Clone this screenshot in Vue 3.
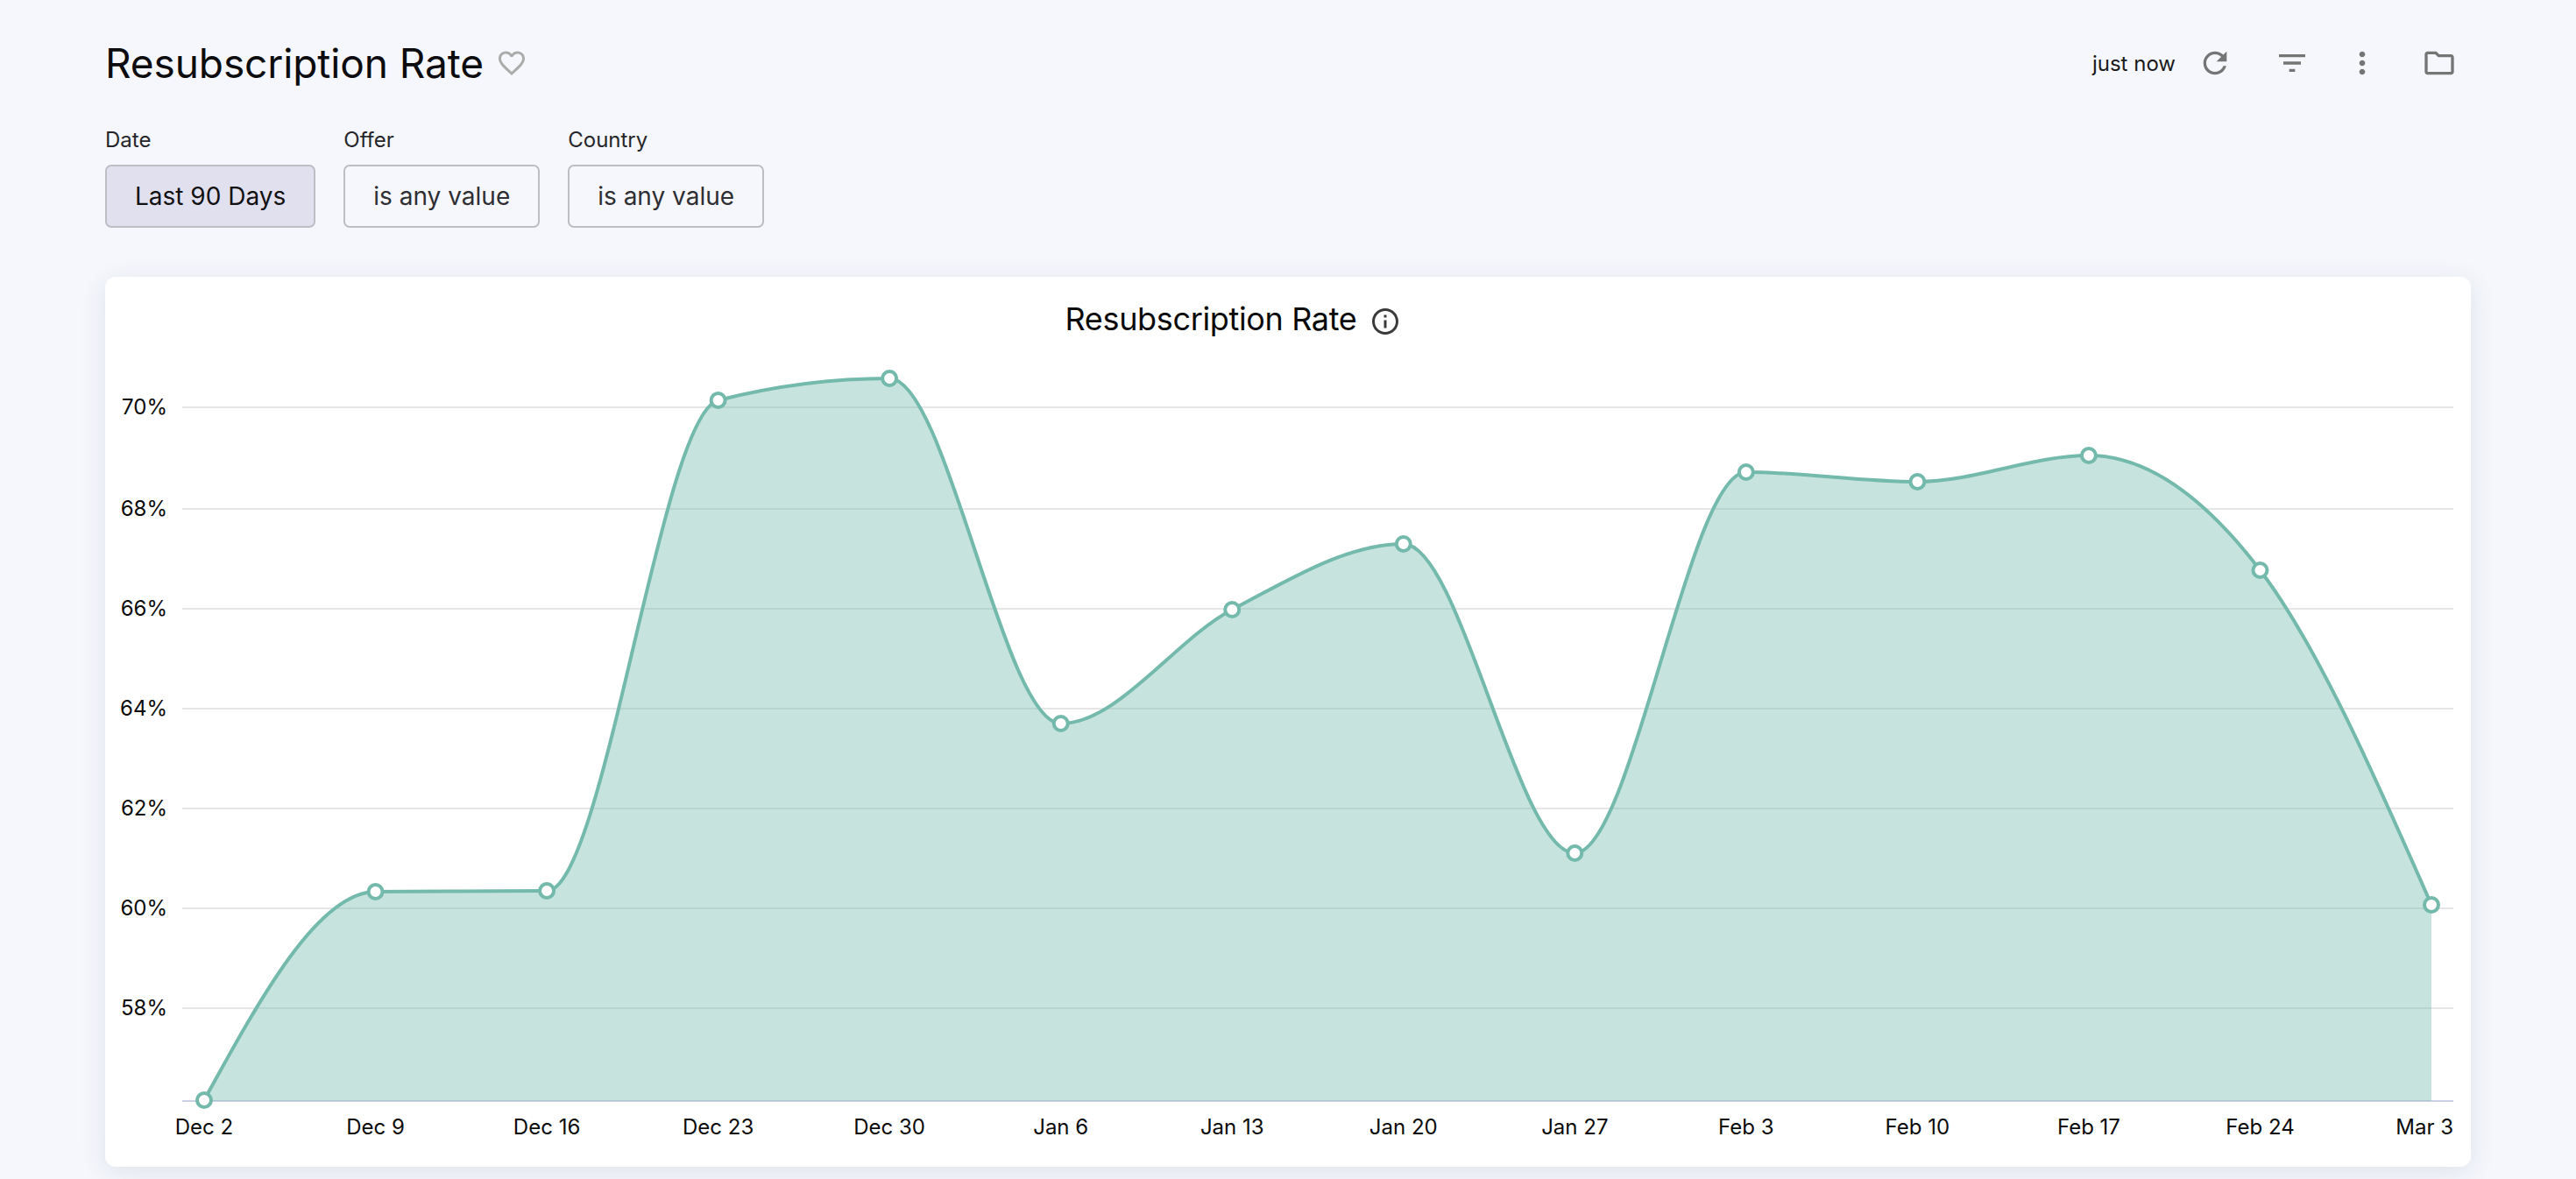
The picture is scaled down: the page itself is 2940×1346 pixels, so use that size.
<script setup>
const data = [
  ['Dec 2', 1256], ['Dec 9', 1018], ['Dec 16', 1017], ['Dec 23', 457], ['Dec 30', 432], ['Jan 6', 826], ['Jan 13', 696],
  ['Jan 20', 621], ['Jan 27', 974], ['Feb 3', 539], ['Feb 10', 550], ['Feb 17', 520], ['Feb 24', 651], ['Mar 3', 1033],
]
const x0 = 233
const step = (2775 - 233) / 13
const top = 316
const points = data.map(([label, y], i) => ({ label, x: x0 + step * i, y: y - top }))

const ticks = [
  ['70%', 465], ['68%', 581], ['66%', 695], ['64%', 809], ['62%', 923], ['60%', 1037], ['58%', 1151],
].map(([label, y]) => ({ label, y: y - top }))
const axisY = 1257 - top

function sign(v) { return v < 0 ? -1 : 1 }
function monotonePath(p) {
  const n = p.length
  const t = new Array(n)
  const slope = (a, b) => (b.y - a.y) / (b.x - a.x)
  for (let i = 1; i < n - 1; i++) {
    const h0 = p[i].x - p[i - 1].x
    const h1 = p[i + 1].x - p[i].x
    const s0 = slope(p[i - 1], p[i])
    const s1 = slope(p[i], p[i + 1])
    const m = (s0 * h1 + s1 * h0) / (h0 + h1)
    t[i] = (sign(s0) + sign(s1)) * Math.min(Math.abs(s0), Math.abs(s1), 0.5 * Math.abs(m)) || 0
  }
  t[0] = (3 * slope(p[0], p[1]) - t[1]) / 2
  t[n - 1] = (3 * slope(p[n - 2], p[n - 1]) - t[n - 2]) / 2
  let d = `M${p[0].x} ${p[0].y}`
  for (let i = 0; i < n - 1; i++) {
    const dx = (p[i + 1].x - p[i].x) / 3
    d += `C${p[i].x + dx} ${p[i].y + dx * t[i]} ${p[i + 1].x - dx} ${p[i + 1].y - dx * t[i + 1]} ${p[i + 1].x} ${p[i + 1].y}`
  }
  return d
}
const line = monotonePath(points)
const area = `${line}L${points[points.length - 1].x} ${axisY}L${points[0].x} ${axisY}Z`

const filters = [
  { label: 'Date', value: 'Last 90 Days', active: true },
  { label: 'Offer', value: 'is any value', active: false },
  { label: 'Country', value: 'is any value', active: false },
]
</script>

<template>
  <div class="page">
    <header class="top">
      <div class="title-wrap">
        <h1 class="title">Resubscription Rate</h1>
        <svg class="heart" viewBox="0 0 24 24"><path d="M16.5 3c-1.74 0-3.41.81-4.5 2.09C10.91 3.81 9.24 3 7.5 3 4.42 3 2 5.42 2 8.5c0 3.78 3.4 6.86 8.55 11.54L12 21.35l1.45-1.32C18.6 15.36 22 12.28 22 8.5 22 5.42 19.58 3 16.5 3zm-4.4 15.55l-.1.1-.1-.1C7.14 14.24 4 11.39 4 8.5 4 6.5 5.5 5 7.5 5c1.54 0 3.04.99 3.57 2.36h1.87C13.46 5.99 14.96 5 16.5 5c2 0 3.5 1.5 3.5 3.5 0 2.89-3.14 5.74-7.9 10.05z"/></svg>
      </div>
      <div class="tools">
        <span class="stamp">just now</span>
        <svg class="tool refresh" viewBox="0 0 24 24"><path d="M17.65 6.35C16.2 4.9 14.21 4 12 4c-4.42 0-7.99 3.58-7.99 8s3.57 8 7.99 8c3.73 0 6.84-2.55 7.73-6h-2.08c-.82 2.33-3.04 4-5.65 4-3.31 0-6-2.69-6-6s2.69-6 6-6c1.66 0 3.14.69 4.22 1.78L13 11h7V4l-2.35 2.35z"/></svg>
        <svg class="tool filter" viewBox="0 0 24 24"><path d="M10 18h4v-2h-4v2zM3 6v2h18V6H3zm3 7h12v-2H6v2z"/></svg>
        <svg class="tool more" viewBox="0 0 24 24"><path d="M12 8c1.1 0 2-.9 2-2s-.9-2-2-2-2 .9-2 2 .9 2 2 2zm0 2c-1.1 0-2 .9-2 2s.9 2 2 2 2-.9 2-2-.9-2-2-2zm0 6c-1.1 0-2 .9-2 2s.9 2 2 2 2-.9 2-2-.9-2-2-2z"/></svg>
        <svg class="tool folder" viewBox="0 0 24 24"><path d="M9.17 6l2 2H20v10H4V6h5.17M10 4H4c-1.1 0-1.99.9-1.99 2L2 18c0 1.1.9 2 2 2h16c1.1 0 2-.9 2-2V8c0-1.1-.9-2-2-2h-8l-2-2z"/></svg>
      </div>
    </header>

    <section class="filters">
      <div v-for="f in filters" :key="f.label" class="filter-item">
        <label class="filter-label">{{ f.label }}</label>
        <button class="filter-btn" :class="{ active: f.active }">{{ f.value }}</button>
      </div>
    </section>

    <section class="card">
      <svg class="chart" width="2700" height="1016" viewBox="120 0 2700 1016">
        <g v-for="t in ticks" :key="t.label">
          <line class="grid" x1="208" x2="2800" :y1="t.y" :y2="t.y" />
          <text class="tick" x="191" :y="t.y + 8" text-anchor="end">{{ t.label }}</text>
        </g>
        <line class="axis" x1="208" x2="2800" :y1="axisY" :y2="axisY" />
        <path class="area" :d="area" />
        <path class="line" :d="line" />
        <circle v-for="p in points" :key="p.label" class="dot" :cx="p.x" :cy="p.y" r="8" />
        <text
          v-for="(p, i) in points"
          :key="'l' + p.label"
          class="tick"
          :x="i === points.length - 1 ? 2800 : p.x"
          :y="axisY + 38"
          :text-anchor="i === points.length - 1 ? 'end' : 'middle'"
        >{{ p.label }}</text>
        <text class="chart-title" x="1382" y="61" text-anchor="middle">Resubscription Rate</text>
        <g transform="translate(1563 33) scale(1.5)">
          <path class="info" d="M11 7h2v2h-2zm0 4h2v6h-2zm1-9C6.48 2 2 6.48 2 12s4.48 10 10 10 10-4.48 10-10S17.52 2 12 2zm0 18c-4.41 0-8-3.59-8-8s3.59-8 8-8 8 3.59 8 8-3.59 8-8 8z"/>
        </g>
      </svg>
    </section>
  </div>
</template>

<style>
html, body { margin: 0; background: #f5f7fc; }
</style>

<style scoped>
.page {
  box-sizing: border-box;
  width: 2940px;
  height: 1346px;
  padding: 0 120px;
  background: #f5f7fc;
  font-family: Inter, "Liberation Sans", sans-serif;
  overflow: hidden;
}
.top {
  display: flex;
  justify-content: space-between;
  align-items: center;
  height: 144px;
}
.title-wrap { display: flex; align-items: center; gap: 14px; }
.title { margin: 0; font-size: 46px; letter-spacing: -0.1px; font-weight: 400; line-height: 60px; color: #0c0c0e; }
.heart { width: 36px; height: 36px; fill: #ababab; }
.tools { display: flex; align-items: center; margin-right: 16px; }
.stamp { font-size: 24px; color: #1a1a1a; margin-right: 25px; }
.tool { width: 40px; height: 40px; fill: #757575; }
.filter { margin-left: 48px; }
.more { margin-left: 40px; }
.folder { margin-left: 48px; }

.filters { display: flex; gap: 32px; }
.filter-item { display: flex; flex-direction: column; }
.filter-label { font-size: 24px; line-height: 30px; color: #26262a; margin-top: 1px; margin-bottom: 13px; }
.filter-btn {
  box-sizing: border-box;
  height: 72px;
  padding: 0 32px;
  border: 2px solid #bdbdc4;
  border-radius: 7px;
  background: #f5f7fc;
  font-family: inherit;
  font-size: 28px;
  color: #2e2e33;
}
.filter-btn.active { background: #e1e0ef; color: #111; }

.card {
  width: 2700px;
  height: 1016px;
  margin-top: 56px;
  border-radius: 12px;
  background: #fff;
  box-shadow: 0 6px 30px rgba(40, 45, 90, 0.1);
  overflow: hidden;
}
.chart { display: block; }
.grid { stroke: #e6e6e6; stroke-width: 2; }
.axis { stroke: #cdd1e8; stroke-width: 2; }
.area { fill: #74baac; fill-opacity: 0.4; }
.line { fill: none; stroke: #74baac; stroke-width: 4; }
.dot { fill: #fff; stroke: #74baac; stroke-width: 4; }
.tick { font-size: 24px; fill: #0a0a0a; font-family: Inter, "Liberation Sans", sans-serif; }
.chart-title { font-size: 36px; letter-spacing: -0.35px; fill: #0a0a0a; font-family: Inter, "Liberation Sans", sans-serif; }
.info { fill: #3a3a3a; }
</style>
